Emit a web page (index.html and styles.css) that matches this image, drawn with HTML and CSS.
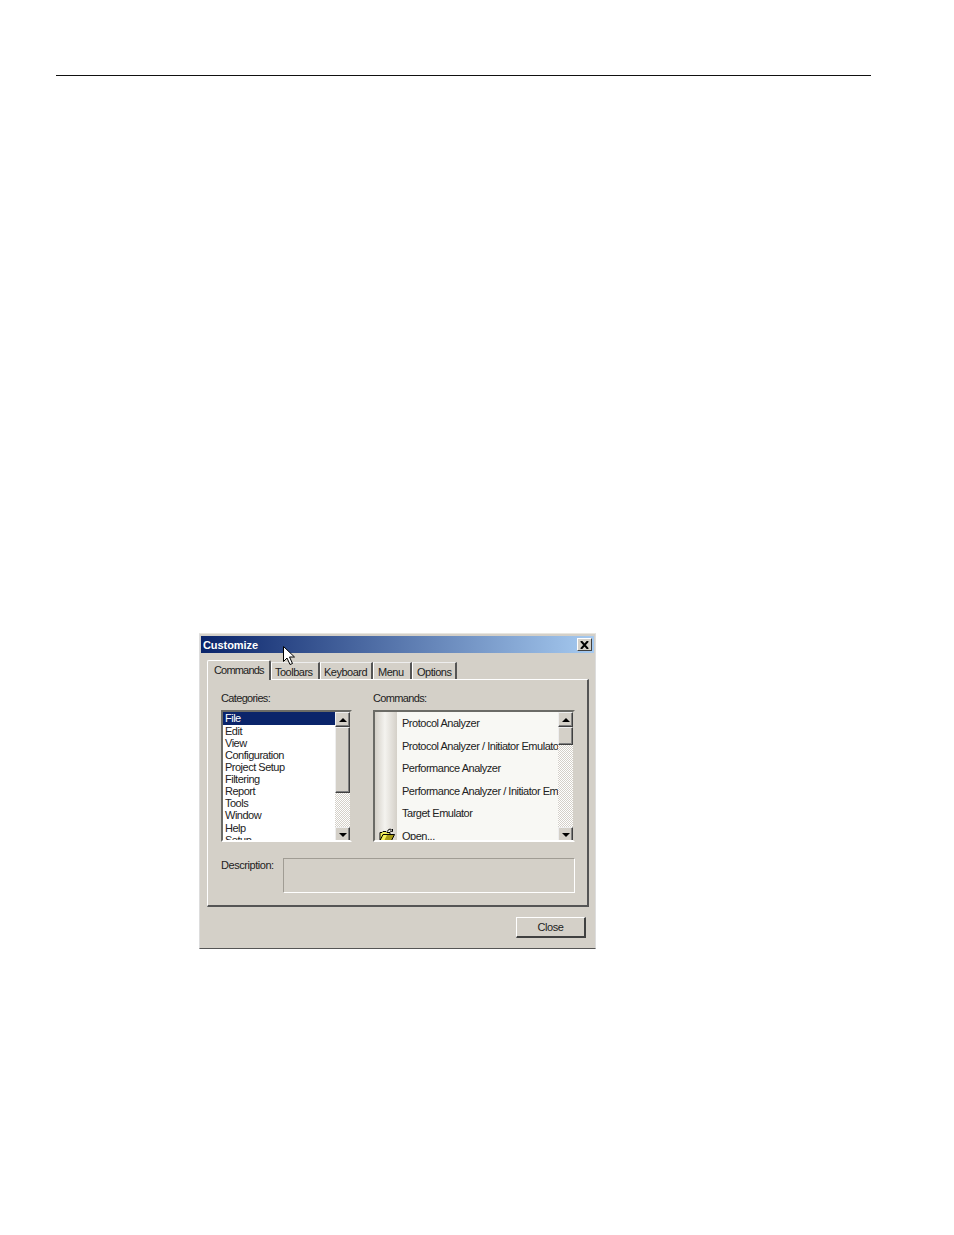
FILE: index.html
```html
<!DOCTYPE html>
<html lang="en">
<head>
<meta charset="utf-8">
<title>Customize</title>
<link rel="stylesheet" href="styles.css">
</head>
<body>
<hr class="rule">
<div class="dialog">
  <div class="titlebar">
    <span class="title">Customize</span>
    <span class="close-x"><svg width="9" height="8" viewBox="0 0 9 8"><path d="M1 0l7 8M8 0L1 8" fill="none" stroke="#000" stroke-width="2"/></svg></span>
  </div>
  <div class="tabs">
    <span class="tab active">Commands</span>
    <span class="tab t1">Toolbars</span>
    <span class="tab t2">Keyboard</span>
    <span class="tab t3">Menu</span>
    <span class="tab t4">Options</span>
  </div>
  <div class="panel">
    <div class="columns">
      <div class="col-cat">
        <div class="label">Categories:</div>
        <div class="listbox">
          <div class="cat-list">
            <div class="cat selected">File</div>
            <div class="cat">Edit</div>
            <div class="cat">View</div>
            <div class="cat">Configuration</div>
            <div class="cat">Project Setup</div>
            <div class="cat">Filtering</div>
            <div class="cat">Report</div>
            <div class="cat">Tools</div>
            <div class="cat">Window</div>
            <div class="cat">Help</div>
            <div class="cat">Setup</div>
          </div>
          <div class="scrollbar">
            <span class="sbtn"><i class="arrow-up"></i></span>
            <span class="thumb thumb-cat"></span>
            <span class="track"></span>
            <span class="sbtn"><i class="arrow-down"></i></span>
          </div>
        </div>
      </div>
      <div class="col-cmd">
        <div class="label">Commands:</div>
        <div class="listbox">
          <div class="gutter"></div>
          <div class="cmd-list">
            <div class="cmd">Protocol Analyzer</div>
            <div class="cmd">Protocol Analyzer / Initiator Emulator</div>
            <div class="cmd">Performance Analyzer</div>
            <div class="cmd">Performance Analyzer / Initiator Emulator</div>
            <div class="cmd">Target Emulator</div>
            <div class="cmd">Open...</div>
          </div>
          <svg class="folder" width="16" height="13" viewBox="0 0 16 13">
            <path d="M8.500 3.500C9 1 11 1 12.500 1.500M13.500 3.500l-2.500-.5M13.500 3.500V1" fill="none" stroke="#000"/>
            <path d="M1 12.500V4.500h2l1-1h3l1 1h3v2" fill="#f2ee5a" stroke="#000"/>
            <path d="M1 12.500l3-6h11.500l-3 6z" fill="#a89c18" stroke="#000"/>
            <path d="M2 12l2.500-5H8L5.500 12z" fill="#f6f25c"/>
          </svg>
          <div class="scrollbar">
            <span class="sbtn"><i class="arrow-up"></i></span>
            <span class="thumb thumb-cmd"></span>
            <span class="track"></span>
            <span class="sbtn"><i class="arrow-down"></i></span>
          </div>
        </div>
      </div>
    </div>
    <div class="desc-row">
      <span class="desc-label">Description:</span>
      <div class="desc-box"></div>
    </div>
  </div>
  <div class="footer"><span class="close-btn">Close</span></div>
  <svg class="pointer" width="13" height="20" viewBox="0 0 13 20">
    <path d="M.500.500v15l3.500-3.500 3 6.500 2.500-1-3-6.500h5z" fill="#fff" stroke="#000"/>
  </svg>
</div>
</body>
</html>
```
FILE: styles.css
```css
html, body { margin: 0; padding: 0; background: #fff; }
body { width: 954px; height: 1235px; overflow: hidden; font-family: "Liberation Sans", Arial, sans-serif; font-size: 11px; color: #222; }
.rule { margin: 75px 0 0 56px; width: 815px; height: 1px; border: 0; background: #111; }
.dialog { position: relative; box-sizing: border-box; width: 397px; height: 316px; margin: 557px 0 0 199px; padding: 2px 1px 0; background: #d4d0c8; border: 1px solid; border-color: #e8e6e0 #ddd #555 #ddd; }
.titlebar { display: flex; justify-content: space-between; align-items: center; height: 17px; padding: 0 2px 0 2px; background: linear-gradient(90deg, #0a246a, #a6caf0); }
.title { color: #fff; font-weight: 700; font-size: 11px; letter-spacing: -.07px; }
.close-x { box-sizing: border-box; display: flex; align-items: center; justify-content: center; width: 15px; height: 13px; background: #d4d0c8; border: 1px solid; border-color: #fff #404040 #404040 #fff; }
.tabs { display: flex; align-items: flex-end; height: 26px; padding-left: 6px; }
.tab { box-sizing: border-box; height: 17px; padding: 3px 0 0 3px; line-height: 13px; font-size: 11px; letter-spacing: -.5px; border-right: 2px solid #555; border-top: 1px solid #eee; border-left: 1px solid #fff; white-space: nowrap; position: relative; }
.tab.active { height: 20px; width: 64px; padding: 3px 0 0 6px; letter-spacing: -.82px; border-top: 1px solid #fff; border-right: 2px solid #555; border-radius: 2px 2px 0 0; margin-bottom: -1px; background: #d4d0c8; z-index: 1; }
.t1 { width: 49px; }
.t2 { width: 53px; }
.t3 { width: 39px; padding-left: 4px; }
.t4 { width: 45px; padding-left: 4px; }
.panel { box-sizing: border-box; width: 382px; height: 228px; margin-left: 6px; padding: 9px 12px 0 13px; border: 1px solid; border-color: #fff #555 #555 #fff; border-width: 1px 2px 2px 1px; }
.columns { display: flex; gap: 21px; }
.col-cat { width: 131px; }
.col-cmd { width: 202px; }
.label { height: 21px; line-height: 19px; letter-spacing: -.65px; font-size: 11px; }
.listbox { position: relative; box-sizing: border-box; display: flex; height: 132px; background: #fff; border: 2px solid; border-color: #6b6b66 #d4d0c8 #fff #6b6b66; overflow: hidden; }
.col-cmd .listbox { background: #f8f8f4; }
.cat-list { flex: 1; min-width: 0; overflow: hidden; }
.cat { height: 12.150px; line-height: 13px; padding-left: 2px; font-size: 11px; letter-spacing: -.5px; white-space: nowrap; }
.cat.selected { background: #0a246a; color: #fff; height: 12.500px; }
.gutter { width: 22px; flex: none; background: linear-gradient(90deg, #d4d0c8, #f4f3ef 45%, #d4d0c8); }
.cmd-list { flex: 1; min-width: 0; overflow: hidden; padding-left: 5px; }
.cmd { height: 22.500px; line-height: 22px; font-size: 11px; letter-spacing: -.48px; white-space: nowrap; }
.folder { position: absolute; left: 4px; top: 116px; }
.scrollbar { flex: none; width: 15px; height: 130px; display: flex; flex-direction: column; }
.sbtn, .thumb { box-sizing: border-box; flex: none; display: flex; align-items: center; justify-content: center; width: 15px; background: #d4d0c8; border: 1px solid; border-color: #eee #404040 #404040 #eee; box-shadow: inset -1px -1px #808080; }
.sbtn { height: 15px; }
.thumb-cat { height: 66px; }
.thumb-cmd { height: 18px; }
.track { flex: 1; background: repeating-conic-gradient(#d4d0c8 0 25%, #fff 0 50%) 0 0 / 2px 2px; }
.arrow-up, .arrow-down { width: 0; height: 0; border-left: 4px solid transparent; border-right: 4px solid transparent; }
.arrow-up { border-bottom: 4px solid #000; }
.arrow-down { border-top: 4px solid #000; }
.desc-row { display: flex; margin-top: 16px; }
.desc-label { width: 62px; line-height: 14px; font-size: 11px; letter-spacing: -.45px; }
.desc-box { box-sizing: border-box; width: 292px; height: 35px; border: 1px solid; border-color: #a09c94 #fff #fff #a09c94; }
.footer { display: flex; justify-content: flex-end; padding: 10px 8px 0 0; }
.close-btn { box-sizing: border-box; width: 70px; height: 21px; line-height: 18px; text-align: center; font-size: 11px; letter-spacing: -.45px; background: #d4d0c8; border: 1px solid; border-color: #fff #404040 #404040 #fff; border-width: 1px 2px 2px 1px; }
.pointer { position: absolute; left: 83px; top: 12px; }
```
